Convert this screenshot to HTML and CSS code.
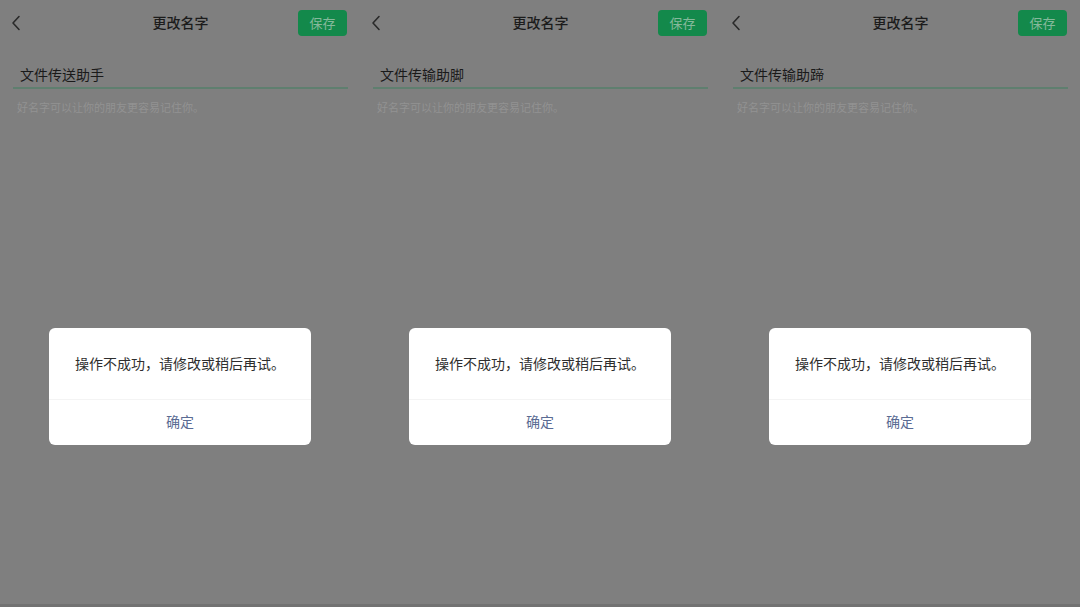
FILE: index.html
```html
<!DOCTYPE html>
<html lang="zh-CN">
<head>
<meta charset="utf-8">
<title>更改名字</title>
<link rel="stylesheet" href="styles.css">
</head>
<body>
<div class="row">
  <section class="panel">
    <header class="bar">
      <svg class="back" width="10" height="16" viewBox="0 0 10 16"><path d="M8 1.5 L2 8 L8 14.5" fill="none" stroke="#2a2a2a" stroke-width="1.6" stroke-linecap="round" stroke-linejoin="round"/></svg>
      <div class="title">更改名字</div>
      <div class="save">保存</div>
    </header>
    <div class="field">文件传送助手</div>
    <div class="hint">好名字可以让你的朋友更容易记住你。</div>
    <div class="dialog">
      <div class="msg">操作不成功，请修改或稍后再试。</div>
      <div class="ok">确定</div>
    </div>
  </section>
  <section class="panel">
    <header class="bar">
      <svg class="back" width="10" height="16" viewBox="0 0 10 16"><path d="M8 1.5 L2 8 L8 14.5" fill="none" stroke="#2a2a2a" stroke-width="1.6" stroke-linecap="round" stroke-linejoin="round"/></svg>
      <div class="title">更改名字</div>
      <div class="save">保存</div>
    </header>
    <div class="field">文件传输助脚</div>
    <div class="hint">好名字可以让你的朋友更容易记住你。</div>
    <div class="dialog">
      <div class="msg">操作不成功，请修改或稍后再试。</div>
      <div class="ok">确定</div>
    </div>
  </section>
  <section class="panel">
    <header class="bar">
      <svg class="back" width="10" height="16" viewBox="0 0 10 16"><path d="M8 1.5 L2 8 L8 14.5" fill="none" stroke="#2a2a2a" stroke-width="1.6" stroke-linecap="round" stroke-linejoin="round"/></svg>
      <div class="title">更改名字</div>
      <div class="save">保存</div>
    </header>
    <div class="field">文件传输助蹄</div>
    <div class="hint">好名字可以让你的朋友更容易记住你。</div>
    <div class="dialog">
      <div class="msg">操作不成功，请修改或稍后再试。</div>
      <div class="ok">确定</div>
    </div>
  </section>
</div>
</body>
</html>
```

FILE: styles.css
```css
html, body {
  margin: 0;
  padding: 0;
}
body {
  width: 1080px;
  height: 607px;
  overflow: hidden;
  background: #727272;
  font-family: "Noto Sans CJK SC", "Noto Sans", sans-serif;
}
.row {
  display: flex;
  height: 604px;
  background: #7f7f7f;
}
.panel {
  position: relative;
  width: 360px;
  flex: 0 0 360px;
  display: flex;
  flex-direction: column;
}
.bar {
  position: relative;
  height: 46px;
  display: flex;
  align-items: center;
  justify-content: space-between;
  padding: 0 13px 0 11px;
}
.back {
  display: block;
}
.title {
  position: absolute;
  left: 0;
  right: 0;
  top: 12px;
  line-height: 20px;
  text-align: center;
  font-size: 14px;
  font-weight: 500;
  color: #1c1c1c;
  pointer-events: none;
  padding-left: 1px;
}
.save {
  width: 49px;
  height: 26px;
  border-radius: 4px;
  background: #13894b;
  color: #85b99b;
  font-size: 13px;
  line-height: 26px;
  text-align: center;
}
.field {
  margin: 16px 12px 0 13px;
  padding-left: 7px;
  height: 25px;
  line-height: 24px;
  font-size: 14px;
  color: #1a1a1a;
  border-bottom: 2px solid #5f7f6f;
}
.hint {
  margin-top: 12px;
  padding-left: 17px;
  font-size: 11px;
  line-height: 12px;
  color: #929292;
}
.dialog {
  position: absolute;
  left: 49px;
  top: 328px;
  width: 262px;
  height: 117px;
  background: #ffffff;
  border-radius: 6px;
  display: flex;
  flex-direction: column;
}
.msg {
  height: 72px;
  box-sizing: border-box;
  padding-top: 25px;
  line-height: 20px;
  text-align: center;
  font-size: 14px;
  color: #2e2e2e;
  border-bottom: 1px solid #f4f4f4;
}
.ok {
  flex: 1;
  display: flex;
  align-items: center;
  justify-content: center;
  padding-bottom: 3px;
  font-size: 14px;
  color: #5a6b93;
}
```
